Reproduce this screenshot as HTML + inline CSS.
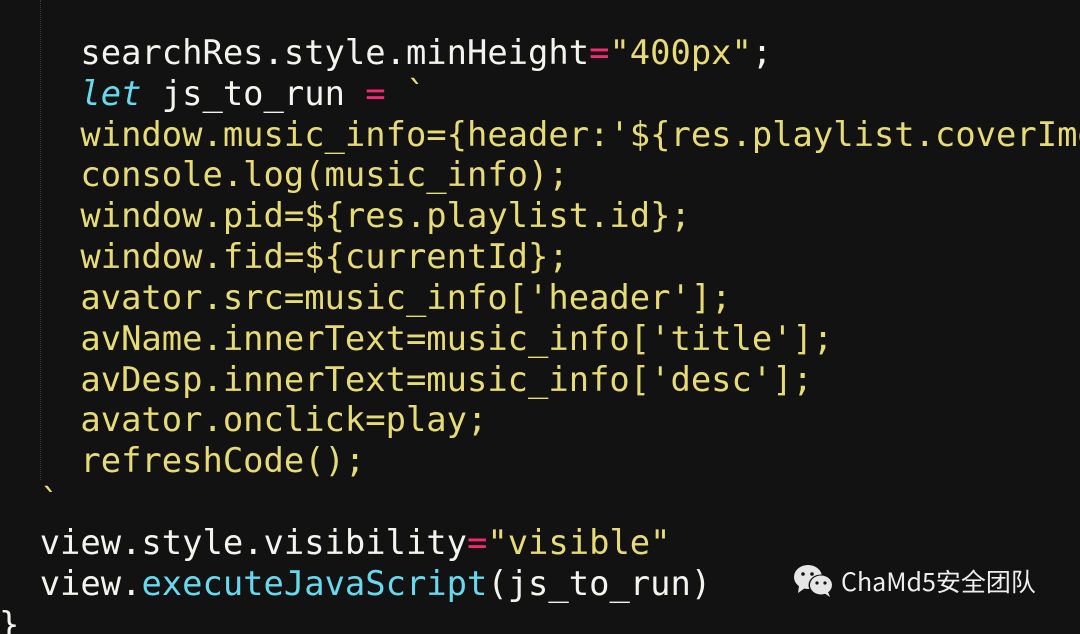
<!DOCTYPE html>
<html><head><meta charset="utf-8"><style>
html,body{margin:0;padding:0;width:1080px;height:633px;overflow:hidden;background:#121212;}
pre{position:absolute;left:-1px;top:-8px;width:1081px;height:642px;overflow:hidden;margin:0;font-family:"DejaVu Sans Mono","Liberation Mono",monospace;font-size:33.8px;line-height:40.85px;color:#f4f4ee;white-space:pre;}
.y{color:#e6db74}.p{color:#f92672}.c{color:#66d9ef}.i{font-style:italic;color:#66d9ef}
.guide{position:absolute;left:40px;top:0;height:480px;border-left:1px dotted #3a3a3a;}
.wm{position:absolute;left:793px;top:563px;font-family:"Noto Sans CJK SC","Liberation Sans",sans-serif;font-size:25px;color:#eee;display:flex;align-items:center;gap:6px;}
</style></head><body>
<div class="guide"></div>
<pre>

    searchRes.style.minHeight<span class="p">=</span><span class="y">"400px"</span>;
    <span class="i">let</span> js_to_run <span class="p">=</span> <span class="y">`</span>
<span class="y">    window.music_info={header:'${res.playlist.coverImgUrl}'</span>
<span class="y">    console.log(music_info);</span>
<span class="y">    window.pid=${res.playlist.id};</span>
<span class="y">    window.fid=${currentId};</span>
<span class="y">    avator.src=music_info['header'];</span>
<span class="y">    avName.innerText=music_info['title'];</span>
<span class="y">    avDesp.innerText=music_info['desc'];</span>
<span class="y">    avator.onclick=play;</span>
<span class="y">    refreshCode();</span>
<span class="y">  `</span>
  view.style.visibility<span class="p">=</span><span class="y">"visible"</span>
  view.<span class="c">executeJavaScript</span>(js_to_run)
}</pre>
<div class="wm"><svg width="42" height="34" viewBox="0 0 42 34"><ellipse cx="15" cy="13" rx="14" ry="12" fill="#e6e6e6"/><path d="M6 22 L5 29 L12 24Z" fill="#e6e6e6"/><ellipse cx="28" cy="21" rx="12.5" ry="10.5" fill="#121212"/><ellipse cx="28" cy="21" rx="11" ry="9.5" fill="#e6e6e6"/><path d="M35 28 L37 33 L31 29Z" fill="#e6e6e6"/><circle cx="10" cy="10" r="1.8" fill="#121212"/><circle cx="19" cy="10" r="1.8" fill="#121212"/><circle cx="24" cy="19" r="1.6" fill="#121212"/><circle cx="32" cy="19" r="1.6" fill="#121212"/></svg><span>ChaMd5安全团队</span></div>
</body></html>
